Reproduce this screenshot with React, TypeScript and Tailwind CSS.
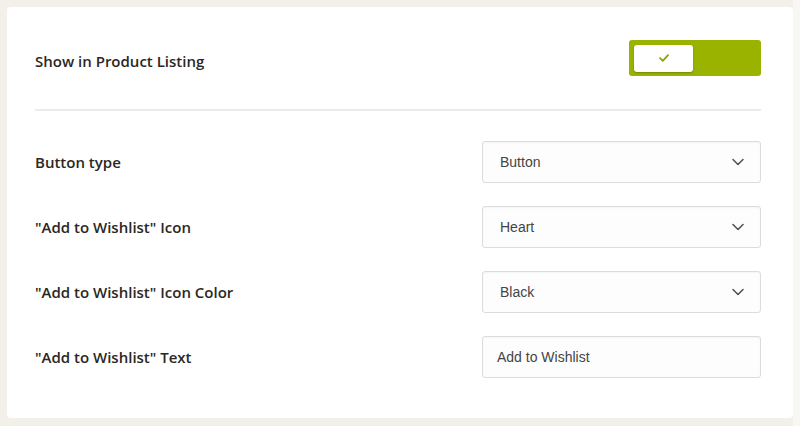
function Chevron() {
  return (
    <svg width="14" height="14" viewBox="0 0 14 14" fill="none" className="text-[#555]">
      <path d="M2 4.5 L7 9.5 L12 4.5" stroke="currentColor" strokeWidth="1.6" strokeLinecap="round" strokeLinejoin="round" />
    </svg>
  );
}

function SelectBox({ value }: { value: string }) {
  return (
    <div className="flex h-[42px] w-[279px] items-center justify-between rounded-[3px] border border-[#dcdcdc] bg-[#fdfdfd] pl-[17px] pr-[15px] shadow-[inset_0_1px_2px_rgba(0,0,0,0.04)]">
      <span className="font-['Liberation_Sans',Arial,sans-serif] text-[14px] text-[#444]">{value}</span>
      <Chevron />
    </div>
  );
}

function Row({ label, children }: { label: string; children: React.ReactNode }) {
  return (
    <div className="flex items-center justify-between">
      <span className="font-['Open_Sans',sans-serif] text-[15px] font-semibold text-[#2b2723]">{label}</span>
      {children}
    </div>
  );
}

export default function App() {
  return (
    <div className="flex h-[426px] w-[800px] bg-[#f3f0e9]">
      <div className="ml-[7px] mt-[7px] flex h-[411px] w-[786px] flex-col rounded-[4px] bg-white pl-[28px] pr-[32px] pt-[33px]">
        <div className="flex items-center justify-between">
          <span className="mt-[6px] font-['Open_Sans',sans-serif] text-[15px] font-semibold text-[#2b2723]">
            Show in Product Listing
          </span>
          <div className="flex h-[36px] w-[132px] items-center rounded-[3px] bg-[#9ab300] pl-[5px]">
            <div className="flex h-[27px] w-[59px] items-center justify-center rounded-[3px] bg-white shadow-[0_1px_2px_rgba(0,0,0,0.25)]">
              <svg width="10" height="8" viewBox="0 0 10 8" fill="none">
                <path d="M1 4.2 L3.8 6.8 L9 1.2" stroke="#8aa800" strokeWidth="1.8" strokeLinecap="round" strokeLinejoin="round" />
              </svg>
            </div>
          </div>
        </div>
        <div className="mt-[33px] h-[2px] bg-[#ebebeb]" />
        <div className="mt-[30px] flex flex-col gap-[23px]">
          <Row label="Button type">
            <SelectBox value="Button" />
          </Row>
          <Row label={'"Add to Wishlist" Icon'}>
            <SelectBox value="Heart" />
          </Row>
          <Row label={'"Add to Wishlist" Icon Color'}>
            <SelectBox value="Black" />
          </Row>
          <Row label={'"Add to Wishlist" Text'}>
            <div className="flex h-[42px] w-[279px] items-center rounded-[3px] border border-[#dcdcdc] bg-[#fdfdfd] pl-[14px] shadow-[inset_0_1px_2px_rgba(0,0,0,0.04)]">
              <span className="font-['Liberation_Sans',Arial,sans-serif] text-[14px] text-[#444]">Add to Wishlist</span>
            </div>
          </Row>
        </div>
      </div>
      <div className="ml-auto h-full w-[7px] bg-[#f8f7f4]" />
    </div>
  );
}
